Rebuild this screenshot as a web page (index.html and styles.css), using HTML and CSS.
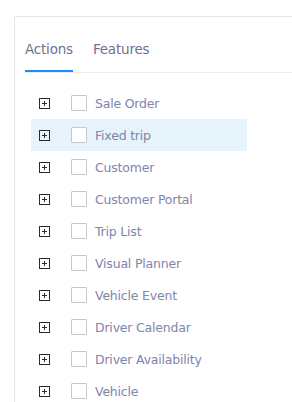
FILE: index.html
```html
<!DOCTYPE html>
<html>
<head>
<meta charset="utf-8">
<link rel="stylesheet" href="styles.css">
</head>
<body>
<div class="card">
  <div class="tabs">
    <div class="tab active">Actions</div>
    <div class="tab">Features</div>
  </div>
  <ul class="tree">
    <li class="row"><span class="plus"></span><span class="check"></span><span class="label">Sale Order</span></li>
    <li class="row hl"><span class="plus"></span><span class="check"></span><span class="label">Fixed trip</span></li>
    <li class="row"><span class="plus"></span><span class="check"></span><span class="label">Customer</span></li>
    <li class="row"><span class="plus"></span><span class="check"></span><span class="label">Customer Portal</span></li>
    <li class="row"><span class="plus"></span><span class="check"></span><span class="label">Trip List</span></li>
    <li class="row"><span class="plus"></span><span class="check"></span><span class="label">Visual Planner</span></li>
    <li class="row"><span class="plus"></span><span class="check"></span><span class="label">Vehicle Event</span></li>
    <li class="row"><span class="plus"></span><span class="check"></span><span class="label">Driver Calendar</span></li>
    <li class="row"><span class="plus"></span><span class="check"></span><span class="label">Driver Availability</span></li>
    <li class="row"><span class="plus"></span><span class="check"></span><span class="label">Vehicle</span></li>
  </ul>
</div>
</body>
</html>
```
FILE: styles.css
```css
html, body {
  margin: 0;
  padding: 0;
  background: #ffffff;
  overflow: hidden;
}
body {
  font-family: "DejaVu Sans", "Open Sans", sans-serif;
  padding: 16px 0 0 14px;
  height: 402px;
  box-sizing: border-box;
}
.card {
  border-top: 1px solid #e4e6ef;
  border-left: 1px solid #e4e6ef;
  height: 100%;
  box-sizing: border-box;
  padding: 0 0 0 10px;
  overflow: hidden;
}
.tabs {
  display: flex;
  gap: 20px;
  border-bottom: 1px solid #ebedf3;
  padding-top: 24px;
}
.tab {
  font-size: 13.5px;
  color: #6c7293;
  padding-bottom: 14px;
  line-height: 17px;
  letter-spacing: -0.2px;
}
.tab.active {
  box-shadow: inset 0 -2px 0 #1a8cff;
}
.tree {
  list-style: none;
  margin: 14px 0 0 6px;
  padding: 0;
}
.row {
  display: flex;
  align-items: center;
  height: 32px;
  width: 216px;
  padding-left: 8px;
  box-sizing: border-box;
}
.row.hl {
  background: #e6f3fa;
}
.plus {
  position: relative;
  width: 11px;
  height: 11px;
  border: 1px solid #2b2b2b;
  box-sizing: border-box;
  flex: none;
}
.plus::before, .plus::after {
  content: "";
  position: absolute;
  background: #2b2b2b;
}
.plus::before {
  left: 2px; right: 2px; top: 4px; height: 1px;
}
.plus::after {
  top: 2px; bottom: 2px; left: 4px; width: 1px;
}
.check {
  width: 16px;
  height: 16px;
  border: 1px solid #c8c8c8;
  box-sizing: border-box;
  border-radius: 1px;
  margin-left: 21px;
  flex: none;
  background: #fff;
}
.label {
  margin-left: 8px;
  font-size: 12.5px;
  color: #8085ac;
  letter-spacing: -0.2px;
  white-space: nowrap;
}
```
